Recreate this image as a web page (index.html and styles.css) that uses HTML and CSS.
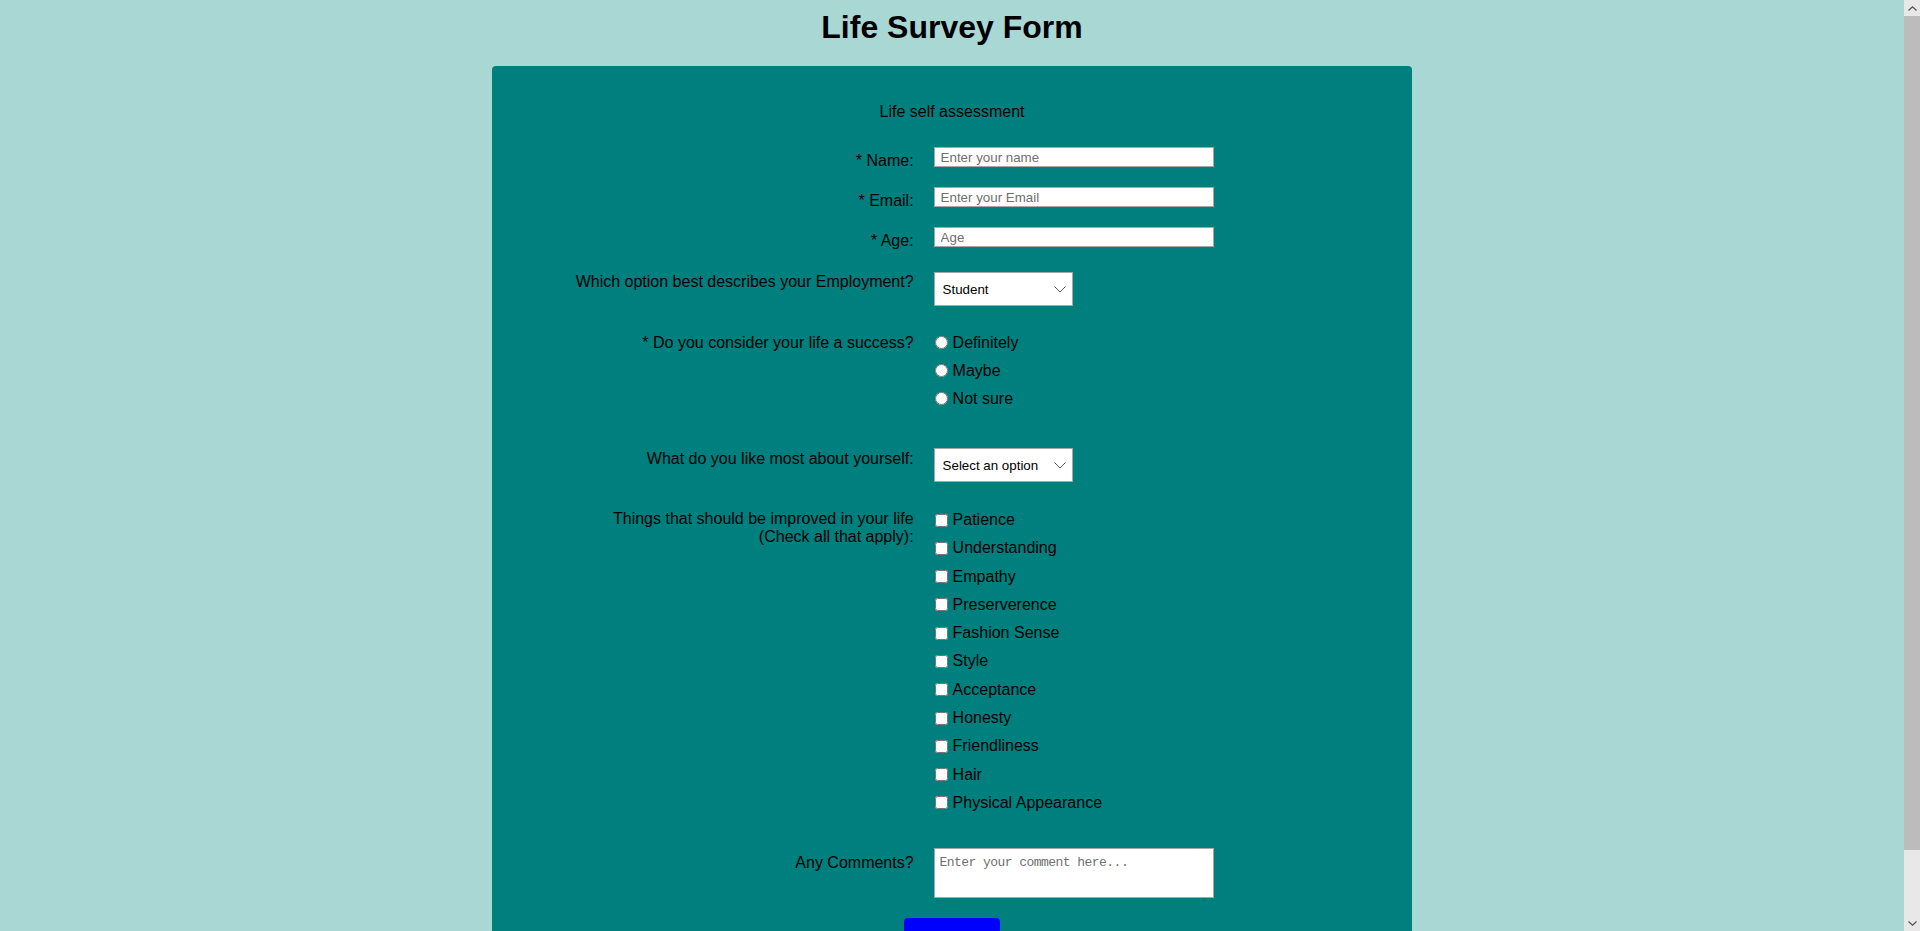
FILE: index.html
```html
<!DOCTYPE html>
<html lang="en">
<head>
<meta charset="utf-8">
<title>Life Survey Form</title>
<link rel="stylesheet" href="styles.css">
</head>
<body>
<h1 id="title" class="title">Life Survey Form</h1>
<form id="survey-form" class="card">
  <p id="description" class="description">Life self assessment</p>

  <div class="row row-name">
    <label id="name-label" class="label label-text" for="name">* Name:</label>
    <div class="control"><input id="name" class="text-input" type="text" placeholder="Enter your name" required></div>
  </div>

  <div class="row row-email">
    <label id="email-label" class="label label-text" for="email">* Email:</label>
    <div class="control"><input id="email" class="text-input" type="email" placeholder="Enter your Email" required></div>
  </div>

  <div class="row row-age">
    <label id="number-label" class="label label-text" for="number">* Age:</label>
    <div class="control"><input id="number" class="text-input" type="number" min="1" max="125" placeholder="Age"></div>
  </div>

  <div class="row row-employment">
    <label class="label label-select" for="dropdown">Which option best describes your Employment?</label>
    <div class="control">
      <div class="select-wrap">
        <select id="dropdown" class="select">
          <option>Student</option>
          <option>Full time job</option>
          <option>Part time job</option>
          <option>Unemployed</option>
          <option>Retired</option>
        </select>
        <svg class="chevron" width="12" height="7" viewBox="0 0 12 7" aria-hidden="true"><path d="M0.5 0.5 L6 6 L11.5 0.5" fill="none" stroke="#5a5a5a" stroke-width="1"/></svg>
      </div>
    </div>
  </div>

  <div class="row row-success">
    <div class="label label-radio">* Do you consider your life a success?</div>
    <div class="control">
      <label class="option"><input class="radio" type="radio" name="success" value="definitely">Definitely</label>
      <label class="option"><input class="radio" type="radio" name="success" value="maybe">Maybe</label>
      <label class="option"><input class="radio" type="radio" name="success" value="not-sure">Not sure</label>
    </div>
  </div>

  <div class="row row-like">
    <label class="label label-select label-like" for="like">What do you like most about yourself:</label>
    <div class="control">
      <div class="select-wrap">
        <select id="like" class="select">
          <option>Select an option</option>
          <option>Personality</option>
          <option>Looks</option>
          <option>Intelligence</option>
          <option>Humor</option>
        </select>
        <svg class="chevron" width="12" height="7" viewBox="0 0 12 7" aria-hidden="true"><path d="M0.5 0.5 L6 6 L11.5 0.5" fill="none" stroke="#5a5a5a" stroke-width="1"/></svg>
      </div>
    </div>
  </div>

  <div class="row row-improve">
    <div class="label label-check">Things that should be improved in your life<br>(Check all that apply):</div>
    <div class="control">
      <label class="check-option"><input class="checkbox" type="checkbox" value="patience">Patience</label>
      <label class="check-option"><input class="checkbox" type="checkbox" value="understanding">Understanding</label>
      <label class="check-option"><input class="checkbox" type="checkbox" value="empathy">Empathy</label>
      <label class="check-option"><input class="checkbox" type="checkbox" value="preserverence">Preserverence</label>
      <label class="check-option"><input class="checkbox" type="checkbox" value="fashion">Fashion Sense</label>
      <label class="check-option"><input class="checkbox" type="checkbox" value="style">Style</label>
      <label class="check-option"><input class="checkbox" type="checkbox" value="acceptance">Acceptance</label>
      <label class="check-option"><input class="checkbox" type="checkbox" value="honesty">Honesty</label>
      <label class="check-option"><input class="checkbox" type="checkbox" value="friendliness">Friendliness</label>
      <label class="check-option"><input class="checkbox" type="checkbox" value="hair">Hair</label>
      <label class="check-option"><input class="checkbox" type="checkbox" value="appearance">Physical Appearance</label>
    </div>
  </div>

  <div class="row row-comments">
    <label class="label label-area" for="comments">Any Comments?</label>
    <div class="control"><textarea id="comments" class="textarea" placeholder="Enter your comment here..."></textarea></div>
  </div>

  <div class="submit-row">
    <button id="submit" class="submit" type="submit">Submit</button>
  </div>
</form>

<div class="scrollbar" aria-hidden="true">
  <div class="sb-btn sb-up"><svg width="9" height="5" viewBox="0 0 9 5"><path d="M0.5 4.5 L4.5 0.8 L8.5 4.5" fill="none" stroke="#505050" stroke-width="1.2"/></svg></div>
  <div class="sb-track"><div class="sb-thumb"></div></div>
  <div class="sb-btn sb-down"><svg width="9" height="5" viewBox="0 0 9 5"><path d="M0.5 0.5 L4.5 4.2 L8.5 0.5" fill="none" stroke="#505050" stroke-width="1.2"/></svg></div>
</div>
</body>
</html>
```

FILE: styles.css
```css
html {
  background: #a9d7d3;
}

body {
  margin: 8px 24px 8px 8px;
  font-family: "Liberation Sans", Arial, sans-serif;
  color: #000;
  background: #a9d7d3;
}

.title {
  margin: 1px 0 20px;
  text-align: center;
  font-size: 32px;
  line-height: 37px;
  font-weight: bold;
}

.card {
  box-sizing: border-box;
  width: 920px;
  margin: 0 auto;
  padding: 37px 0 37px;
  background: #007f7f;
  border-radius: 4px;
  font-size: 16px;
}

.description {
  margin: 0 0 26px;
  text-align: center;
  line-height: 18px;
}

.row {
  display: flex;
  align-items: flex-start;
}

.label {
  flex: 0 0 48%;
  box-sizing: border-box;
  padding-right: 20px;
  text-align: right;
  line-height: 18px;
}

.control {
  flex: 1 1 auto;
}

.label-text {
  padding-top: 5px;
  margin-bottom: -5px;
}

.label-select {
  padding-top: 1px;
}

.label-like {
  padding-top: 2px;
}

.label-radio {
  padding-top: 5px;
}

.label-check {
  padding-top: 4px;
}

.label-area {
  padding-top: 6px;
}

.row-name,
.row-email {
  margin-bottom: 20px;
}

.row-age {
  margin-bottom: 25px;
}

.row-employment {
  margin-bottom: 22.6px;
}

.row-success {
  margin-bottom: 35px;
}

.row-like {
  margin-bottom: 23.85px;
}

.row-improve {
  margin-bottom: 30.85px;
}

.row-comments {
  margin-bottom: 20px;
}

.text-input {
  display: block;
  box-sizing: border-box;
  width: 280px;
  height: 20px;
  margin: 0;
  padding: 0 6px;
  border: 1px solid #a7a7a7;
  background: #fff;
  font-family: "Liberation Sans", Arial, sans-serif;
  font-size: 13.333px;
  color: #000;
  -moz-appearance: textfield;
}

.text-input::-webkit-outer-spin-button,
.text-input::-webkit-inner-spin-button {
  -webkit-appearance: none;
  margin: 0;
}

.text-input::placeholder,
.textarea::placeholder {
  color: #6f6f6f;
}

.select-wrap {
  position: relative;
  width: 139px;
  height: 34px;
}

.select {
  -webkit-appearance: none;
  appearance: none;
  box-sizing: border-box;
  display: block;
  width: 139px;
  height: 34px;
  margin: 0;
  padding: 0 24px 0 8px;
  border: 1px solid #a7a7a7;
  border-radius: 0;
  background: #fff;
  font-family: "Liberation Sans", Arial, sans-serif;
  font-size: 13.333px;
  color: #000;
}

.chevron {
  position: absolute;
  right: 7px;
  top: 14px;
  pointer-events: none;
}

.option,
.check-option {
  display: flex;
  align-items: center;
  line-height: 18px;
}

.option {
  height: 28.15px;
}

.check-option {
  height: 28.3px;
}

.radio,
.checkbox {
  width: 13px;
  height: 13px;
  margin: 0 5px 0 1px;
  flex: 0 0 auto;
}

.textarea {
  display: block;
  box-sizing: border-box;
  width: 280px;
  height: 50px;
  margin: 0;
  padding: 6px 5px 5px;
  border: 1px solid #a7a7a7;
  background: #fff;
  font-family: "Liberation Mono", "DejaVu Sans Mono", monospace;
  font-size: 13px;
  letter-spacing: -0.55px;
  resize: none;
}

.submit-row {
  display: flex;
  justify-content: center;
}

.submit {
  width: 96px;
  height: 40px;
  margin: 0;
  border: none;
  border-radius: 4px;
  background: #0000ff;
  color: #fff;
  font-family: "Liberation Sans", Arial, sans-serif;
  font-size: 16px;
}

.scrollbar {
  position: fixed;
  top: 0;
  right: 0;
  bottom: 0;
  width: 16px;
  display: flex;
  flex-direction: column;
  background: #e8e8e8;
}

.sb-btn {
  flex: 0 0 16px;
  display: flex;
  align-items: center;
  justify-content: center;
}

.sb-track {
  flex: 1 1 auto;
}

.sb-thumb {
  height: 834px;
  background: #bcbcbc;
}
```
